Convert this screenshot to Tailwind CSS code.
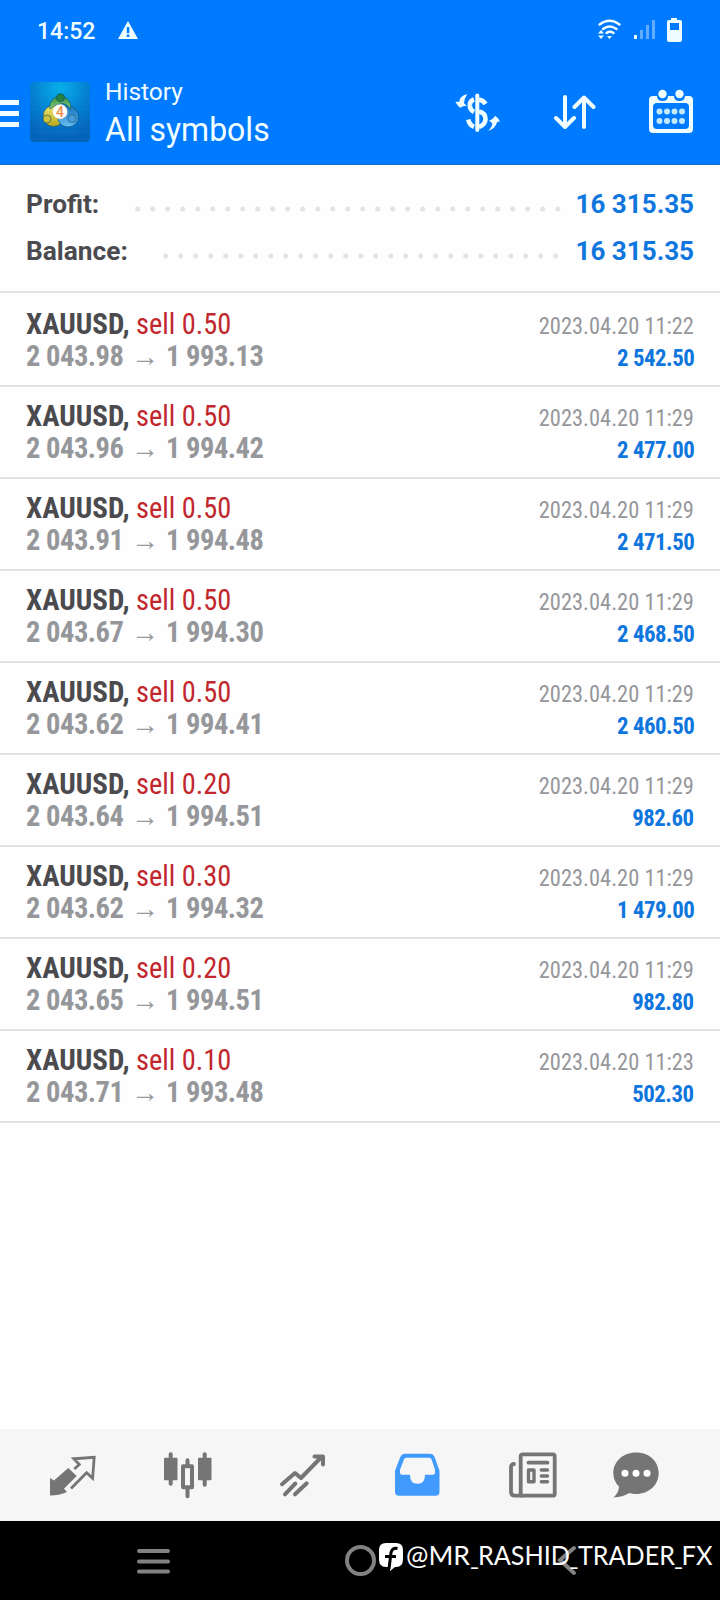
<!DOCTYPE html>
<html lang="en">
<head>
<meta charset="utf-8">
<title>History</title>
<script src="https://cdn.jsdelivr.net/npm/@tailwindcss/browser@4"></script>
</head>
<body class="bg-white font-['Roboto',sans-serif]">
<div class="flex h-[1600px] w-[720px] flex-col overflow-hidden bg-[#fefefe]">
  <header class="flex h-[165px] shrink-0 flex-col border-b border-[#1c69bd] bg-[#007aff] text-[#f0fdff]">
    <div class="flex h-[60px] items-center pl-[37px] pr-[37px] pt-[2px]">
      <span class="mt-[2px] w-[58px] whitespace-nowrap text-[23px] font-medium leading-[28px]">14:52</span>
      <svg class="ml-[23px] -mt-[2px]" width="20" height="18" viewBox="0 0 20 18"><path fill="currentColor" fill-rule="evenodd" d="M10 0 20 18H0ZM8.800 6v6h2.500V6Zm0 7.600v2.300h2.500v-2.300Z"/></svg>
      <svg class="ml-auto" width="86" height="26" viewBox="0 0 86 26">
        <g fill="none" stroke="currentColor" stroke-width="2.300" stroke-linecap="round"><path d="M2.500 6.500Q12.500 -1 22.500 6.500M6 11Q12.500 6 19.500 11M9.500 15Q13 12.500 16.500 15"/></g>
        <path fill="currentColor" d="M1 15.500 4 12l3 3.500zM1 17.500h6L4 21zM10 18h5l-2.500 3z"/>
        <path fill="currentColor" d="M37 17h3v4h-3z"/><path fill="#fff" opacity=".38" d="M43 12h3v9h-3zM49 7h3v14h-3zM55 2h3v19h-3z"/>
        <path fill="currentColor" fill-rule="evenodd" d="M74 0h6v2h3q2 0 2 2v18q0 2-2 2H72q-2 0-2-2V4q0-2 2-2h2zM73 5v7h9V5z"/>
      </svg>
    </div>
    <div class="flex h-[104px] items-start">
      <svg class="mt-[40px]" width="19" height="28" viewBox="0 0 19 28"><path fill="currentColor" d="M0 0h19v5H0zM0 11h19v5H0zM0 22h19v5H0z"/></svg>
      <svg class="ml-[11px] mt-[22px]" width="60" height="60" viewBox="0 0 60 60">
        <defs>
          <radialGradient id="sky" cx=".5" cy=".1" r=".85"><stop stop-color="#08aeea"/><stop offset=".6" stop-color="#047bce"/><stop offset="1" stop-color="#0563ba"/></radialGradient>
          <linearGradient id="gr" x2="0" y2="1"><stop stop-color="#2b8a45"/><stop offset="1" stop-color="#8bd07a"/></linearGradient>
          <linearGradient id="ye" x2="0" y2="1"><stop stop-color="#ece76a"/><stop offset="1" stop-color="#b9a81c"/></linearGradient>
          <linearGradient id="bl" x2="0" y2="1"><stop stop-color="#1674bd"/><stop offset="1" stop-color="#66c0f4"/></linearGradient>
        </defs>
        <rect width="60" height="60" rx="4" fill="url(#sky)"/>
        <path d="M0 12h60M0 28h60M0 50h60M12 0v60M42 0v60" stroke="#5cc8ff" stroke-opacity=".08"/>
        <g stroke="#0d4963" stroke-width=".6">
          <circle cx="23.500" cy="34" r="10.500" fill="url(#ye)"/><circle cx="38" cy="34.500" r="10.500" fill="url(#bl)"/>
          <path d="M20 27a10.500 10.500 0 1 1 20.500 0Q35 20 30 22q-5 1-10 5Z" fill="url(#gr)"/>
          <circle cx="30.500" cy="15.700" r="4" fill="#27813f"/><circle cx="17" cy="37" r="4" fill="#cfc23d"/><circle cx="42" cy="36.500" r="4" fill="#489edc"/>
        </g>
        <circle cx="30" cy="29.700" r="7.300" fill="#fff" stroke="#d8d0c4" stroke-width=".6"/>
        <text x="30" y="34.500" text-anchor="middle" font-family="Roboto" font-weight="500" font-size="14" fill="#f18a43">4</text>
      </svg>
      <div class="ml-[15px] mt-[18px] flex flex-col whitespace-nowrap">
        <span class="text-[24.5px] leading-[28px]">History</span>
        <span class="mt-[5px] origin-left scale-x-[0.97] text-[33px] leading-[38px]">All symbols</span>
      </div>
      <svg class="ml-auto mt-[32px]" width="46" height="41" viewBox="0 0 46 41">
        <path fill="currentColor" d="M13.300 2Q5.500 4 5.300 9.700H1.300Q3 13 6 15.700q3-2 6.700-2L10 11.300Q10 7 13.300 2ZM41 23.700Q45 26 46 29.500l-2.700.2Q41 37 34.300 38.700q4-4 4-7.400L35 28.500Q39 27.500 41 23.700Z"/>
        <g fill="none" stroke="currentColor"><path stroke-width="4" stroke-linecap="round" d="M23.300 3.500V38"/><path stroke-width="4.600" d="M20 7.500Q15.500 9 15.800 14q.4 4 4.200 6M25 7.500q4.500 1 6.500 4.500M14.300 27.500q1 5.500 5.700 7.300M25 19.500q6.500 1.500 6.500 7.500 0 5.500-6.500 8"/></g>
      </svg>
      <svg class="ml-[53px] mt-[34px]" width="43" height="36" viewBox="0 0 43 36"><path fill="none" stroke="currentColor" stroke-width="4" stroke-linecap="round" stroke-linejoin="round" d="M12 3v30M3 24l9 9 9-9M31 33V3.500M21.500 13l9.500-9.500 9.500 9.500"/></svg>
      <svg class="ml-[53px] mr-[27px] mt-[29px]" width="44" height="46" viewBox="0 0 44 46">
        <path fill="currentColor" fill-rule="evenodd" d="M4 7h4q0 5 5.500 5T19 7h6q0 5 5.500 5T36 7h4q4 0 4 4v29q0 4-4 4H4q-4 0-4-4V11q0-4 4-4ZM8 14q-4 0-4 4v18q0 4 4 4h28q4 0 4-4V18q0-4-4-4Z"/>
        <circle cx="13.500" cy="5" r="4.200" fill="currentColor"/><circle cx="30.500" cy="5" r="4.200" fill="currentColor"/>
        <path stroke="#c3e9ff" stroke-width="6" stroke-linecap="round" d="M10.500 22.500h.01M18 22.500h.01M25.500 22.500h.01M33 22.500h.01M10.500 32h.01M18 32h.01M25.500 32h.01M33 32h.01"/>
      </svg>
    </div>
  </header>

  <section class="flex h-[128px] shrink-0 flex-col border-b-2 border-[#e3e3e3] px-[26px] pt-[16px] text-[26px] font-bold leading-[47px] text-[#4a4a4f]">
    <div class="flex h-[47px] items-center">
      <span class="w-[109px] origin-left scale-x-[1.01]">Profit:</span>
      <svg width="426" height="6" class="mt-[9px]"><path d="M2.700 3H424" stroke="#e3e3e3" stroke-width="5" stroke-linecap="round" stroke-dasharray="0 15"/></svg>
      <span class="ml-auto whitespace-nowrap text-[#0f76de]">16 315.35</span>
    </div>
    <div class="flex h-[47px] items-center">
      <span class="w-[137px] origin-left scale-x-[1.01]">Balance:</span>
      <svg width="398" height="6" class="mt-[9px]"><path d="M2.700 3H396" stroke="#e3e3e3" stroke-width="5" stroke-linecap="round" stroke-dasharray="0 15"/></svg>
      <span class="ml-auto whitespace-nowrap text-[#0f76de]">16 315.35</span>
    </div>
  </section>

  <main id="deals" class="flex grow flex-col pt-[2px] font-['Roboto_Condensed','Roboto',sans-serif] font-stretch-condensed"></main>

  <nav class="flex h-[92px] shrink-0 items-start bg-[#f6f6f7] pt-[20px] text-[#757575]">
    <svg class="ml-[48px]" width="50" height="50" viewBox="0 0 50 50"><path fill="currentColor" d="M2 29 6 31.500 20.300 19 28.700 27 16 39.700 19 43Q11 46.500 2 46.500Z"/><path fill="none" stroke="currentColor" stroke-width="2.800" d="M26.300 20l5-4.500-5.500-5.700 20.400-1.500-1.600 21-6-5.600L23 39.500"/></svg>
    <svg class="ml-[62px]" width="52" height="50" viewBox="0 0 52 50"><g fill="currentColor"><rect x="4" y="8.700" width="13.500" height="22.500" rx="1"/><rect x="38" y="8.700" width="13.500" height="22.500" rx="1"/></g><g fill="none" stroke="currentColor" stroke-width="4" stroke-linecap="round"><path d="M10.700 5.300v29.500M44.700 5.300v30.500M27.500 11.300v5M27.500 39v8.300"/><path stroke-linejoin="round" d="M23 17.300h9v21h-9z"/></g></svg>
    <svg class="ml-[64px]" width="50" height="50" viewBox="0 0 50 50"><path fill="none" stroke="currentColor" stroke-width="4" stroke-linecap="round" stroke-linejoin="round" d="M6 35.300 19 24l6 5L45 8.500M38.500 7.500h8.500v8M9 45.300l10.300-10.800M19 45.300l11.700-11"/></svg>
    <svg class="ml-[68px]" width="48" height="50" viewBox="0 0 48 50"><path fill="#419bff" fill-rule="evenodd" transform="translate(0 .8)" d="M11 4h25q3 0 4.500 3l5 14v21q0 4-4 4H5q-4 0-4-4V21L6 8q1.500-4 5-4Zm1.500 4q-2 0-2.500 1.500L6 20v3q0 2 2 2h8q0 9 7.500 9T31 25h8q2 0 2-2v-3L37.500 9.500Q37 8 35 8Z"/></svg>
    <svg class="ml-[66px]" width="50" height="50" viewBox="0 0 50 50"><g fill="none" stroke="currentColor" stroke-width="3.800" stroke-linejoin="round" stroke-linecap="round"><rect x="12.700" y="5.300" width="34" height="41.400" rx="2"/><path d="M6 15q-3 0-3 3v25q0 3.700 4 3.700h7M20.500 13.700h19"/><path stroke-width="3.400" d="M33.300 21h6.200M33.300 27h6.200M33.300 32.700h6.200M20.500 21h5.500v11.700h-5.500z"/></g></svg>
    <svg class="ml-[53px]" width="48" height="50" viewBox="0 0 48 50"><path fill="currentColor" d="M25 3.500C12 3.500 2.300 12.500 2.300 24q0 8 5.700 13.500 0 6-5.500 11 9-.5 16-4.500 3 1 6.500 1c13 0 22.700-9 22.700-21S38 3.500 25 3.500Z"/><g fill="#fff"><circle cx="14" cy="24.300" r="3.500"/><circle cx="25" cy="24.300" r="3.500"/><circle cx="36" cy="24.300" r="3.500"/></g></svg>
  </nav>

  <footer class="relative h-[79px] shrink-0 bg-black">
    <svg class="absolute inset-0" width="720" height="79" viewBox="0 0 720 79"><g fill="none" stroke="#828282" stroke-width="4" stroke-linecap="round"><path d="M139 30h29M139 40.500h29M139 50.500h29"/><circle cx="360.500" cy="39.500" r="13.500"/><path d="M574 27 560 39l14 13"/></g></svg>
    <svg class="absolute left-[379px] top-[20px] overflow-visible" width="341" height="40" viewBox="0 0 341 40">
      <path fill="#fff" d="M7 2h10q7 0 7 7v9q0 8-7 8h-1l-5 4v-4H7q-7 0-7-8V9q0-7 7-7Z"/>
      <path fill="none" stroke="#000" stroke-width="3" d="M18.500 7.500q-5-1-6.500 4L10 28M6 15.500h11"/>
      <g fill="#fbfbfb" font-family="Lato, sans-serif" font-size="26.500">
        <text x="27" y="23.500" textLength="64" lengthAdjust="spacingAndGlyphs">@MR</text>
        <text x="91.500" y="23.500" textLength="8" lengthAdjust="spacingAndGlyphs">_</text>
        <text x="99" y="23.500" textLength="92" lengthAdjust="spacingAndGlyphs">RASHID</text>
        <text x="191" y="23.500" textLength="8" lengthAdjust="spacingAndGlyphs">_</text>
        <text x="199" y="23.500" textLength="97" lengthAdjust="spacingAndGlyphs">TRADER</text>
        <text x="295.500" y="23.500" textLength="8" lengthAdjust="spacingAndGlyphs">_</text>
        <text x="302.500" y="23.500" textLength="31" lengthAdjust="spacingAndGlyphs">FX</text>
      </g>
    </svg>
  </footer>
</div>
<script>
const deals = [
  ["0.50","2 043.98","1 993.13","2023.04.20 11:22","2 542.50"],
  ["0.50","2 043.96","1 994.42","2023.04.20 11:29","2 477.00"],
  ["0.50","2 043.91","1 994.48","2023.04.20 11:29","2 471.50"],
  ["0.50","2 043.67","1 994.30","2023.04.20 11:29","2 468.50"],
  ["0.50","2 043.62","1 994.41","2023.04.20 11:29","2 460.50"],
  ["0.20","2 043.64","1 994.51","2023.04.20 11:29","982.60"],
  ["0.30","2 043.62","1 994.32","2023.04.20 11:29","1 479.00"],
  ["0.20","2 043.65","1 994.51","2023.04.20 11:29","982.80"],
  ["0.10","2 043.71","1 993.48","2023.04.20 11:23","502.30"]
];
document.getElementById("deals").innerHTML = deals.map(([lot, open, close, time, profit]) => `
  <div class="flex h-[92px] shrink-0 justify-between border-b-2 border-[#e3e3e3] px-[26px] pt-[13px] whitespace-nowrap leading-[32px]">
    <div class="flex flex-col text-[30px]">
      <div class="flex h-[32px] font-bold text-[#4a4a4f]"><span class="w-[110px] origin-left scale-x-[0.965]">XAUUSD,</span><span class="origin-left scale-x-[0.945] font-normal text-[#c1272d]">sell ${lot}</span></div>
      <div class="flex h-[32px] font-bold text-[#96979b]"><span class="w-[105px] origin-left scale-x-[0.95] tracking-[-0.5px]">${open}</span><span class="w-[35px] pt-[1px] font-['Liberation_Sans',sans-serif] text-[28px] font-bold">→</span><span class="origin-left scale-x-[0.95] tracking-[-0.5px]">${close}</span></div>
    </div>
    <div class="flex flex-col items-end pt-[2px] text-[24px]">
      <span class="h-[32px] origin-right scale-x-[0.935] text-[#96979b]">${time}</span>
      <span class="h-[32px] origin-right scale-x-[0.95] tracking-[-0.5px] font-bold text-[#0f76de]">${profit}</span>
    </div>
  </div>`).join("");
</script>
</body>
</html>
